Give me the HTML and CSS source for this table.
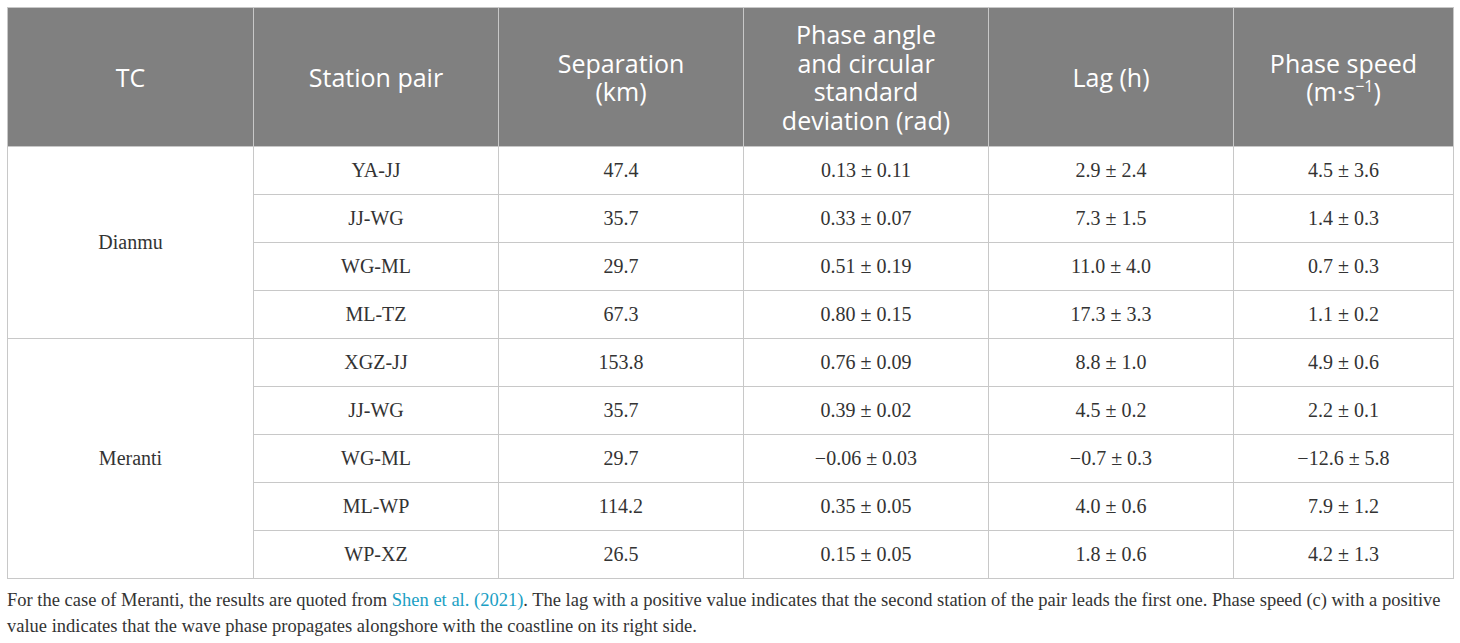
FILE: index.html
```html
<!DOCTYPE html>
<html lang="en">
<head>
    <meta charset="UTF-8">
    <meta name="viewport" content="width=device-width, initial-scale=1.0">
    <title>Phase propagation between station pairs</title>
    <link rel="stylesheet" href="styles.css">
</head>
<body>
    <div class="table-wrap">
        <table class="data-table">
            <colgroup>
                <col class="col-tc">
                <col class="col-std">
                <col class="col-std">
                <col class="col-std">
                <col class="col-std">
                <col class="col-last">
            </colgroup>
            <thead>
                <tr>
                    <th>TC</th>
                    <th>Station pair</th>
                    <th>Separation<br>(km)</th>
                    <th>Phase angle<br>and circular<br>standard<br>deviation (rad)</th>
                    <th>Lag (h)</th>
                    <th>Phase speed<br>(m·s<sup>−1</sup>)</th>
                </tr>
            </thead>
            <tbody>
                <tr>
                    <td rowspan="4">Dianmu</td>
                    <td>YA-JJ</td>
                    <td>47.4</td>
                    <td>0.13 ± 0.11</td>
                    <td>2.9 ± 2.4</td>
                    <td>4.5 ± 3.6</td>
                </tr>
                <tr>
                    <td>JJ-WG</td>
                    <td>35.7</td>
                    <td>0.33 ± 0.07</td>
                    <td>7.3 ± 1.5</td>
                    <td>1.4 ± 0.3</td>
                </tr>
                <tr>
                    <td>WG-ML</td>
                    <td>29.7</td>
                    <td>0.51 ± 0.19</td>
                    <td>11.0 ± 4.0</td>
                    <td>0.7 ± 0.3</td>
                </tr>
                <tr>
                    <td>ML-TZ</td>
                    <td>67.3</td>
                    <td>0.80 ± 0.15</td>
                    <td>17.3 ± 3.3</td>
                    <td>1.1 ± 0.2</td>
                </tr>
                <tr>
                    <td rowspan="5">Meranti</td>
                    <td>XGZ-JJ</td>
                    <td>153.8</td>
                    <td>0.76 ± 0.09</td>
                    <td>8.8 ± 1.0</td>
                    <td>4.9 ± 0.6</td>
                </tr>
                <tr>
                    <td>JJ-WG</td>
                    <td>35.7</td>
                    <td>0.39 ± 0.02</td>
                    <td>4.5 ± 0.2</td>
                    <td>2.2 ± 0.1</td>
                </tr>
                <tr>
                    <td>WG-ML</td>
                    <td>29.7</td>
                    <td>−0.06 ± 0.03</td>
                    <td>−0.7 ± 0.3</td>
                    <td>−12.6 ± 5.8</td>
                </tr>
                <tr>
                    <td>ML-WP</td>
                    <td>114.2</td>
                    <td>0.35 ± 0.05</td>
                    <td>4.0 ± 0.6</td>
                    <td>7.9 ± 1.2</td>
                </tr>
                <tr>
                    <td>WP-XZ</td>
                    <td>26.5</td>
                    <td>0.15 ± 0.05</td>
                    <td>1.8 ± 0.6</td>
                    <td>4.2 ± 1.3</td>
                </tr>
            </tbody>
        </table>
        <p class="table-note">For the case of Meranti, the results are quoted from <a href="#">Shen et al. (2021)</a>. The lag with a positive value indicates that the second station of the pair leads the first one. Phase speed (c) with a positive value indicates that the wave phase propagates alongshore with the coastline on its right side.</p>
    </div>
</body>
</html>
```

FILE: styles.css
```css
body {
    margin: 0;
    padding: 0;
    background-color: #fff;
    color: #333;
    font-family: "Liberation Serif", "Times New Roman", serif;
}

.table-wrap {
    padding: 7px;
}

.data-table {
    width: 1446px;
    border-collapse: collapse;
    table-layout: fixed;
}

.col-tc {
    width: 246px;
}

.col-std {
    width: 245px;
}

.col-last {
    width: 220px;
}

.data-table th {
    height: 138px;
    padding: 0 8px;
    background-color: #808080;
    color: #fff;
    font-family: "Open Sans", "Noto Sans", sans-serif;
    font-size: 25px;
    font-weight: normal;
    line-height: 28.5px;
    text-align: center;
    vertical-align: middle;
    border: 1px solid #c8c8c8;
}

.data-table th sup {
    font-size: 16px;
    line-height: 0;
    vertical-align: 9px;
}

.data-table td {
    height: 47px;
    padding: 0 8px;
    font-size: 20px;
    text-align: center;
    vertical-align: middle;
    border: 1px solid #c8c8c8;
}

.table-note {
    margin: 8px 0 0;
    font-size: 18.5px;
    line-height: 26px;
    color: #333;
}

.table-note a {
    color: #1aa0c4;
    text-decoration: none;
}
```
